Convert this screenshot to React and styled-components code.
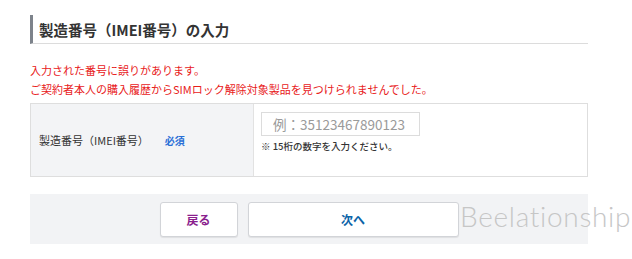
import React from 'react';
import styled, { createGlobalStyle } from 'styled-components';

const GlobalStyle = createGlobalStyle`
  body {
    margin: 0;
    background: #ffffff;
    font-family: "Noto Sans CJK JP", "Noto Sans", sans-serif;
    color: #333333;
  }
`;

const Page = styled.div`
  position: relative;
  width: 632px;
  height: 259px;
  padding: 15px 44px 0 30px;
  box-sizing: border-box;
`;

const Heading = styled.h2`
  margin: 0;
  height: 28px;
  padding-left: 6px;
  border-left: 3px solid #7d838b;
  border-bottom: 1px solid #dcdcdc;
  font-size: 14.5px;
  font-weight: 700;
  line-height: 30px;
  color: #333333;
`;

const Errors = styled.div`
  margin-top: 17px;
  font-size: 11px;
  line-height: 19px;
  color: #e8201a;
`;

const Table = styled.div`
  display: grid;
  grid-template-columns: 223px 1fr;
  margin-top: 4px;
  height: 74px;
  border: 1px solid #dedede;
  box-sizing: border-box;
`;

const LabelCell = styled.div`
  display: flex;
  align-items: center;
  gap: 16px;
  padding-left: 8px;
  background: #f3f4f6;
  border-right: 1px solid #e2e2e2;
  font-size: 11px;
  color: #333333;
`;

const Required = styled.span`
  font-size: 10px;
  font-weight: 700;
  color: #2a6fd6;
`;

const FieldCell = styled.div`
  display: flex;
  flex-direction: column;
  align-items: flex-start;
  padding: 8px 0 0 7px;
`;

const Input = styled.input`
  width: 159px;
  height: 24px;
  box-sizing: border-box;
  border: 1px solid #dcdcdc;
  padding: 0 0 0 11px;
  font-family: "Noto Sans CJK JP", sans-serif;
  font-size: 13.5px;
  color: #333;
  outline: none;
  &::placeholder {
    color: #9a9a9a;
  }
`;

const Note = styled.p`
  margin: 3px 0 0;
  font-size: 9.5px;
  font-weight: 500;
  color: #333333;
`;

const Footer = styled.div`
  display: flex;
  justify-content: center;
  gap: 10px;
  margin-top: 17px;
  padding: 8px 0 7px;
  background: #f2f3f5;
`;

const Button = styled.button`
  width: ${p => p.$w}px;
  height: 35px;
  background: #ffffff;
  border: 1px solid #d2d4d8;
  border-radius: 3px;
  box-shadow: 0 1px 1px rgba(0, 0, 0, 0.08);
  font-family: "Noto Sans CJK JP", sans-serif;
  font-size: 12px;
  font-weight: 700;
  color: ${p => p.$color};
`;

const Watermark = styled.div`
  position: absolute;
  left: 460px;
  top: 199px;
  font-family: Lato, "Open Sans", sans-serif;
  font-weight: 300;
  font-size: 28px;
  letter-spacing: 0.7px;
  color: #c6c6c6;
`;

export default function App() {
  return (
    <Page>
      <GlobalStyle />
      <Heading>製造番号（IMEI番号）の入力</Heading>
      <Errors>
        <div>入力された番号に誤りがあります。</div>
        <div>ご契約者本人の購入履歴からSIMロック解除対象製品を見つけられませんでした。</div>
      </Errors>
      <Table>
        <LabelCell>
          <span>製造番号（IMEI番号）</span>
          <Required>必須</Required>
        </LabelCell>
        <FieldCell>
          <Input placeholder="例：35123467890123" />
          <Note>※ 15桁の数字を入力ください。</Note>
        </FieldCell>
      </Table>
      <Footer>
        <Button $w={78} $color="#8b1f8e">戻る</Button>
        <Button $w={211} $color="#0b64a8">次へ</Button>
      </Footer>
      <Watermark>Beelationship</Watermark>
    </Page>
  );
}
